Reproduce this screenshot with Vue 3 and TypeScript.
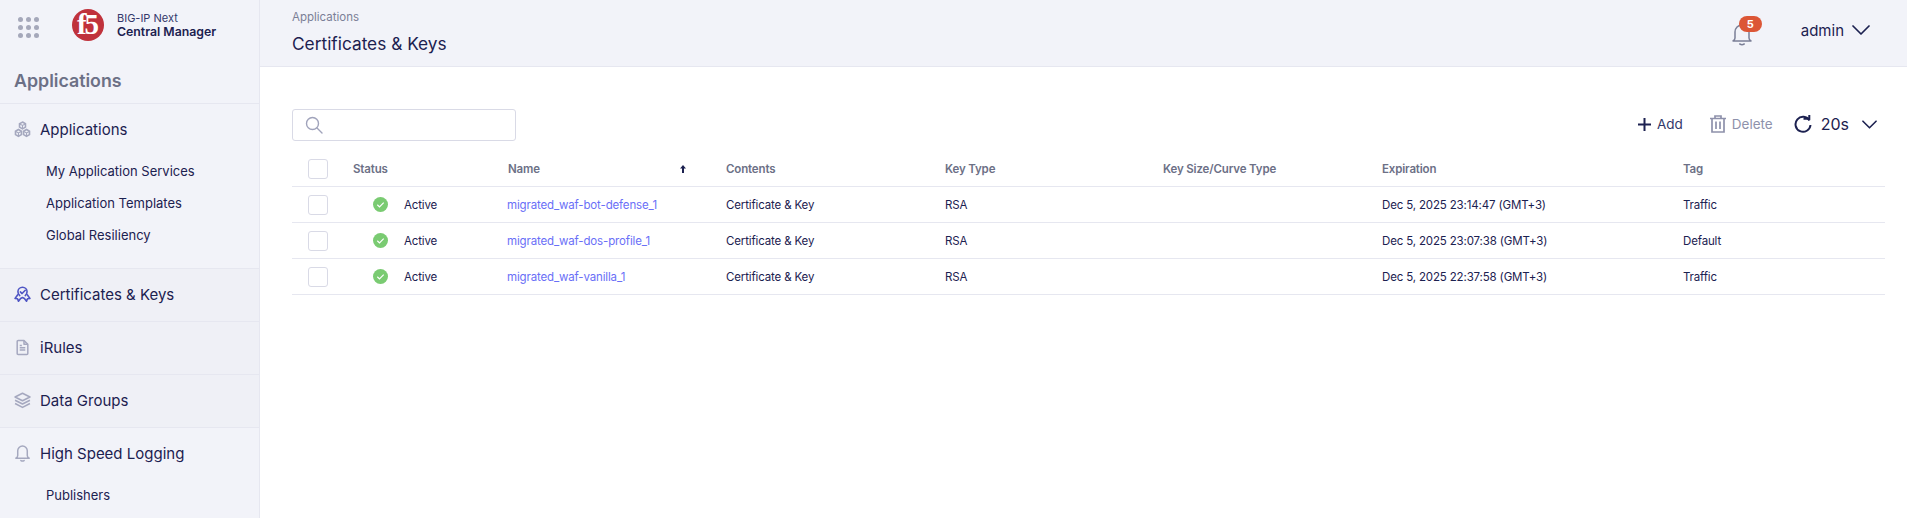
<script setup lang="ts">
interface Row { name: string; exp: string; tag: string }
const rows: Row[] = [
  { name: 'migrated_waf-bot-defense_1', exp: 'Dec 5, 2025 23:14:47 (GMT+3)', tag: 'Traffic' },
  { name: 'migrated_waf-dos-profile_1', exp: 'Dec 5, 2025 23:07:38 (GMT+3)', tag: 'Default' },
  { name: 'migrated_waf-vanilla_1', exp: 'Dec 5, 2025 22:37:58 (GMT+3)', tag: 'Traffic' },
]
const dots = [0, 1, 2, 3, 4, 5, 6, 7, 8]
</script>

<template>
  <div class="app">
    <aside class="side">
      <div class="brand">
        <div class="grid-ico"><i v-for="d in dots" :key="d"></i></div>
        <div class="logo">f5</div>
        <div class="brand-text">
          <div class="bt1">BIG-IP Next</div>
          <div class="bt2">Central Manager</div>
        </div>
      </div>
      <div class="side-title">Applications</div>
      <section class="group first">
        <div class="nav">
          <svg class="ico" viewBox="0 0 16 16" fill="none" stroke="#a5a8bf" stroke-width="1.500">
            <path d="M8 1l2.800 1.600v3.200L8 7.400 5.200 5.800V2.600z" /><path d="M4.200 8l2.800 1.600v3.200l-2.800 1.600-2.800-1.600V9.600z" /><path d="M11.800 8l2.800 1.600v3.200l-2.800 1.600L9 12.800V9.600z" />
            <path d="M8 4.200v3M4.200 11.200v3M11.800 11.200v3M5.500 2.900L8 4.200l2.500-1.300M1.700 9.900l2.500 1.300 2.500-1.300M9.300 9.900l2.500 1.300 2.500-1.300" stroke-width="1" />
          </svg>
          <span>Applications</span>
        </div>
        <div class="sub">My Application Services</div>
        <div class="sub">Application Templates</div>
        <div class="sub">Global Resiliency</div>
      </section>
      <section class="group tall active">
        <div class="nav">
          <svg class="ico" viewBox="0 0 16 16" fill="none" stroke="#4f55c4" stroke-width="1.500" stroke-linejoin="round" stroke-linecap="round">
            <path d="M8 1.200a4.300 4.300 0 0 1 4.300 4.300c0 1.500-.7 2.700-1.700 3.500M8 1.200a4.300 4.300 0 0 0-4.300 4.300c0 1.500.7 2.700 1.700 3.500" />
            <path d="M6 5.600l1.600 1.500 3-3.100" />
            <path d="M3.500 8.300L1 11.700l2.300.3.900 2.400 2-2.700 1.800-.9M12.500 8.300l2.500 3.400-2.300.3-.9 2.400-2-2.700-1.800-.9" />
          </svg>
          <span>Certificates &amp; Keys</span>
        </div>
      </section>
      <section class="group tall active">
        <div class="nav">
          <svg class="ico" viewBox="0 0 16 16" fill="none" stroke="#a5a8bf" stroke-width="1.400" stroke-linejoin="round">
            <path d="M3 2.400c0-.5.4-.9.900-.9h5.500l3.600 3.500v8.600c0 .5-.4.900-.9.900H3.900c-.5 0-.9-.4-.9-.9z" /><path d="M9.400 1.500v3.500H13M5.400 8.200h5.200M5.400 10.400h5.200M5.400 6.200h2" />
          </svg>
          <span>iRules</span>
        </div>
      </section>
      <section class="group tall active">
        <div class="nav">
          <svg class="ico" viewBox="0 0 16 16" fill="none" stroke="#a5a8bf" stroke-width="1.500" stroke-linejoin="round">
            <path d="M8 1.200l7 3.500-7 3.500-7-3.500z" /><path d="M1 7.800l7 3.500 7-3.500" /><path d="M1 10.900l7 3.600 7-3.600" />
          </svg>
          <span>Data Groups</span>
        </div>
      </section>
      <section class="group last">
        <div class="nav">
          <svg class="ico" viewBox="0 0 16 16" fill="none" stroke="#a5a8bf" stroke-width="1.400" stroke-linejoin="round" stroke-linecap="round">
            <path d="M8 1a4.500 4.500 0 0 0-4.500 4.500v4.300c0 1-.8 2.200-1.800 2.700h12.600c-1-.5-1.800-1.700-1.800-2.700V5.500A4.500 4.500 0 0 0 8 1z" /><path d="M6.500 14.600c.8.500 2.200.5 3 0" />
          </svg>
          <span>High Speed Logging</span>
        </div>
        <div class="sub">Publishers</div>
      </section>
    </aside>

    <div class="main">
      <header class="head">
        <div class="head-l">
          <div class="crumb">Applications</div>
          <h1 class="page-title">Certificates &amp; Keys</h1>
        </div>
        <div class="head-r">
          <div class="bell">
            <svg viewBox="0 0 22 24" width="22" height="24" fill="none" stroke="#7b7f97" stroke-width="1.500" stroke-linejoin="round" stroke-linecap="round">
              <path d="M11 3a7 7 0 0 0-7 7v6c0 1.300-.9 2.400-2 3h18c-1.100-.6-2-1.700-2-3v-6a7 7 0 0 0-7-7z" /><path d="M8.800 22c1.200.7 3.200.7 4.400 0" />
            </svg>
            <span class="badge">5</span>
          </div>
          <div class="user">
            <span>admin</span>
            <svg viewBox="0 0 18 10" width="18" height="10" fill="none" stroke="#1c2150" stroke-width="1.700" stroke-linecap="round" stroke-linejoin="round"><path d="M1 1l8 8 8-8" /></svg>
          </div>
        </div>
      </header>

      <div class="content">
        <div class="toolbar">
          <div class="search">
            <svg viewBox="0 0 18 18" width="18" height="18" fill="none" stroke="#a0a3bb" stroke-width="1.400" stroke-linecap="round"><circle cx="7.500" cy="7.500" r="6" /><path d="M12 12l5 5" /></svg>
          </div>
          <div class="actions">
            <button class="act add">
              <svg viewBox="0 0 13 13" width="13" height="13" fill="none" stroke="#1c2150" stroke-width="2"><path d="M6.500 0v13M0 6.500h13" /></svg>
              Add
            </button>
            <button class="act del">
              <svg viewBox="0 0 16 18" width="16" height="18" fill="none" stroke="#8e91ab" stroke-width="1.700"><path d="M0 3.500h16M5 3.500V1h6v2.500M2 3.500V17h12V3.500M6 6.500v7.500M10 6.500v7.500" /></svg>
              Delete
            </button>
            <div class="refresh">
              <svg viewBox="0 0 18 18" width="18" height="18" fill="none" stroke="#1c2150" stroke-width="2"><path d="M15.500 5.500A7.500 7.500 0 1 0 16.500 10" /><path d="M9.500 3.700h5.800V0" fill="none" /></svg>
              <span>20s</span>
              <svg viewBox="0 0 16 9" width="15" height="9" fill="none" stroke="#1c2150" stroke-width="1.700" stroke-linecap="round" stroke-linejoin="round"><path d="M1 1l7 7 7-7" /></svg>
            </div>
          </div>
        </div>

        <table class="tbl">
          <colgroup>
            <col class="c-check" /><col class="c-status" /><col class="c-name" /><col class="c-a" /><col class="c-b" /><col class="c-a" /><col class="c-exp" /><col />
          </colgroup>
          <thead>
            <tr>
              <th class="chk"><span class="box"></span></th>
              <th>Status</th>
              <th>
                <div class="name-h">
                  <span>Name</span>
                  <svg viewBox="0 0 6 8" width="6" height="8" fill="#1c2150"><path d="M3 0l3 3.500H4V8H2V3.500H0z" /></svg>
                </div>
              </th>
              <th>Contents</th>
              <th>Key Type</th>
              <th>Key Size/Curve Type</th>
              <th>Expiration</th>
              <th>Tag</th>
            </tr>
          </thead>
          <tbody>
            <tr v-for="r in rows" :key="r.name">
              <td class="chk"><span class="box"></span></td>
              <td>
                <div class="status">
                  <svg viewBox="0 0 15 15" width="15" height="15"><circle cx="7.500" cy="7.500" r="7.500" fill="#7acb72" /><path d="M4.300 7.800l2.200 2.100 4.200-4.200" fill="none" stroke="#fff" stroke-width="1.200" /></svg>
                  <span>Active</span>
                </div>
              </td>
              <td><a class="link">{{ r.name }}</a></td>
              <td>Certificate &amp; Key</td>
              <td>RSA</td>
              <td></td>
              <td>{{ r.exp }}</td>
              <td>{{ r.tag }}</td>
            </tr>
          </tbody>
        </table>
      </div>
    </div>
  </div>
</template>

<style>
html, body { margin: 0; background: #fff; }
</style>

<style scoped>
.app {
  display: flex;
  width: 1907px;
  height: 518px;
  overflow: hidden;
  font-family: Inter, "Liberation Sans", sans-serif;
  color: #1c2150;
}
.side {
  width: 259px;
  height: 518px;
  flex: none;
  background: #f2f3f9;
  border-right: 1px solid #e6e7f0;
  overflow: hidden;
}
.brand {
  height: 50px;
  display: flex;
  align-items: center;
  padding-left: 18px;
}
.grid-ico {
  display: grid;
  grid-template-columns: repeat(3, 5px);
  gap: 3px;
  width: 21px;
  margin-top: 4px;
}
.grid-ico i {
  width: 5px;
  height: 5px;
  border-radius: 50%;
  background: #a5a8ba;
}
.logo {
  width: 32px;
  height: 32px;
  margin-left: 33px;
  border-radius: 50%;
  background: #c0323c;
  color: #fff;
  font: 700 29px/30px "Liberation Serif", serif;
  letter-spacing: -2px;
  text-align: center;
  text-indent: -2px;
}
.brand-text { margin-left: 13px; }
.bt1 { font-size: 11px; line-height: 14px; color: #33386a; }
.bt2 { font-size: 12.300px; line-height: 14px; font-weight: 600; color: #1c2150; }
.side-title {
  padding: 14px 0 5px 14px;
  line-height: 34px;
  font-size: 17.800px;
  font-weight: 600;
  color: #6c7086;
  border-bottom: 1px solid #e6e7f0;
}
.group { border-bottom: 1px solid #e6e7f0; }
.group.first { height: 164px; }
.group.tall { height: 52px; }
.group.active { background: #eff0f6; }
.group.last { border-bottom: 0; }
.nav {
  display: flex;
  align-items: center;
  box-sizing: border-box;
  height: 52px;
  padding: 0 0 2px 14px;
  font-size: 15px;
  gap: 9px;
}
.ico { width: 17px; height: 17px; flex: none; }
.sub {
  height: 32px;
  line-height: 31px;
  padding-left: 46px;
  font-size: 13px;
}

.main { flex: 1; min-width: 0; }
.head {
  height: 66px;
  background: #f2f3f9;
  border-bottom: 1px solid #e6e7f0;
  display: flex;
  justify-content: space-between;
  padding: 0 17px 0 32px;
}
.crumb { font-size: 11.500px; line-height: 16px; margin-top: 9px; color: #7b7f97; }
.page-title { margin: 7px 0 0; font-size: 17.300px; line-height: 24px; font-weight: 400; color: #1c2150; }
.head-r { display: flex; align-items: center; gap: 48px; padding: 0 20px 6px 0; }
.bell { position: relative; width: 22px; height: 24px; margin-top: 8px; }
.bell svg { display: block; }
.badge {
  position: absolute;
  left: 8px;
  top: -6px;
  width: 23px;
  height: 16px;
  border-radius: 8px;
  background: #dc5636;
  color: #fff;
  font-size: 11px;
  line-height: 16px;
  font-weight: 700;
  text-align: center;
}
.user { display: flex; align-items: center; gap: 8px; font-size: 15px; }
.content { padding: 42px 22px 0 32px; }
.toolbar {
  display: flex;
  justify-content: space-between;
  align-items: center;
  height: 32px;
}
.search {
  box-sizing: border-box;
  width: 224px;
  height: 32px;
  border: 1px solid #d9dae6;
  border-radius: 3px;
  padding: 6px 12px;
  display: flex;
  align-items: center;
}
.actions { display: flex; align-items: center; padding: 0 8px 2px 0; }
.act {
  display: flex;
  align-items: center;
  gap: 6px;
  padding: 0;
  border: 0;
  background: none;
  font: inherit;
  font-size: 13.500px;
  color: #33386a;
}
.del { color: #8e91ab; margin-left: 27px; }
.refresh { display: flex; align-items: center; margin-left: 21px; font-size: 16px; gap: 9px; }
.refresh svg:last-child { margin-left: 4px; }
.tbl {
  width: 1593px;
  table-layout: fixed;
  border-collapse: collapse;
  margin-top: 10px;
  font-size: 11.500px;
  letter-spacing: -0.15px;
  color: #1c2150;
}
.c-check { width: 61px; }
.c-status { width: 155px; }
.c-name { width: 218px; }
.c-a { width: 219px; }
.c-b { width: 218px; }
.c-exp { width: 301px; }
th, td {
  height: 35px;
  padding: 0;
  text-align: left;
  border-bottom: 1px solid #e6e7f0;
}
th { font-weight: 600; color: #6c7086; }
.chk { padding-left: 16px; }
.box {
  display: block;
  box-sizing: border-box;
  width: 20px;
  height: 20px;
  border: 1px solid #d9dae6;
  border-radius: 3px;
  background: #fff;
}
.status { display: flex; align-items: center; gap: 16px; padding-left: 20px; }
.status svg { display: block; }
.name-h { display: flex; justify-content: space-between; align-items: center; padding-right: 40px; }
.link { color: #6a6ff7; margin-left: -1px; }
</style>
